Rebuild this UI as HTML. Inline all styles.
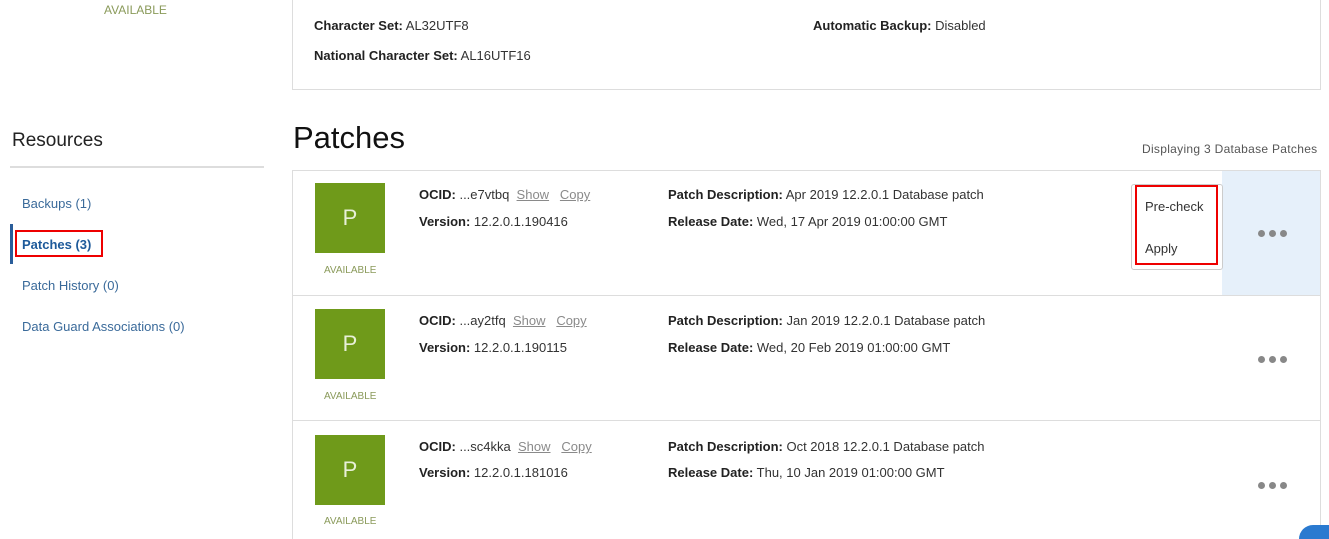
<!DOCTYPE html>
<html style="overflow:hidden;height:539px"><head><style>
body{margin:0;width:1329px;height:539px;overflow:hidden;background:#fff;font-family:"Liberation Sans",sans-serif;color:#333;position:relative}
.a{position:absolute;white-space:nowrap}
.s{font-size:13px}
b{font-weight:bold;color:#222}
.card{position:absolute;left:292px;width:1027px;border:1px solid #ddd;background:#fff}
.ic{position:absolute;left:315px;width:70px;height:70px;background:#6f9a1a;color:#e8f0d8;font-size:22px;text-align:center;line-height:70px}
.av{font-size:10px;color:#8a9a5a}
.lk{color:#8a8a8a;text-decoration:underline}
.dots{position:absolute;left:1258px;font-size:0}
.dots i{display:inline-block;width:7px;height:7px;border-radius:50%;background:#888;margin-right:4px}
</style></head><body>
<div class="a av" style="left:104px;top:3px;font-size:12px">AVAILABLE</div>
<div style="position:absolute;left:292px;top:-2px;width:1027px;height:91px;border:1px solid #ddd;border-top:none"></div>
<div class="a s" style="left:314px;top:18px"><b>Character Set:</b> AL32UTF8</div>
<div class="a s" style="left:314px;top:48px"><b>National Character Set:</b> AL16UTF16</div>
<div class="a s" style="left:813px;top:18px"><b>Automatic Backup:</b> Disabled</div>
<div class="a" style="left:12px;top:130px;font-size:19px;color:#222">Resources</div>
<div style="position:absolute;left:10px;top:166px;width:254px;height:2px;background:#ddd"></div>
<div class="a s" style="left:22px;top:196px;color:#3a6a9a">Backups (1)</div>
<div style="position:absolute;left:10px;top:224px;width:3px;height:40px;background:#2a5d9a"></div>
<div class="a s" style="left:22px;top:237px;color:#1e5a9a;font-weight:bold">Patches (3)</div>
<div style="position:absolute;left:15px;top:230px;width:88px;height:27px;border:2px solid #e00;box-sizing:border-box"></div>
<div class="a s" style="left:22px;top:278px;color:#3a6a9a">Patch History (0)</div>
<div class="a s" style="left:22px;top:319px;color:#3a6a9a">Data Guard Associations (0)</div>
<div class="a" style="left:293px;top:120px;font-size:31px;color:#111">Patches</div>
<div class="a" style="left:1142px;top:142px;font-size:12px;color:#555;letter-spacing:0.3px">Displaying 3 Database Patches</div>

<div class="card" style="top:170px;height:124px"><div style="position:absolute;right:0;top:0;width:98px;height:124px;background:#e6f0fa"></div></div>
<div class="card" style="top:295px;height:124px"></div>
<div class="card" style="top:420px;height:118px;border-bottom:none"></div>

<div class="ic" style="top:183px">P</div><div class="a av" style="left:324px;top:265px">AVAILABLE</div>
<div class="a s" style="left:419px;top:187px"><b>OCID:</b> ...e7vtbq &nbsp;<span class="lk">Show</span> &nbsp; <span class="lk">Copy</span></div>
<div class="a s" style="left:419px;top:214px"><b>Version:</b> 12.2.0.1.190416</div>
<div class="a s" style="left:668px;top:187px"><b>Patch Description:</b> Apr 2019 12.2.0.1 Database patch</div>
<div class="a s" style="left:668px;top:214px"><b>Release Date:</b> Wed, 17 Apr 2019 01:00:00 GMT</div>
<div style="position:absolute;left:1131px;top:184px;width:90px;height:84px;background:#fff;border:1px solid #ccc;border-radius:3px"></div>
<div style="position:absolute;left:1135px;top:185px;width:83px;height:80px;border:2px solid #e00;box-sizing:border-box"></div>
<div class="a s" style="left:1145px;top:199px">Pre-check</div>
<div class="a s" style="left:1145px;top:241px">Apply</div>
<div class="dots" style="top:230px"><i></i><i></i><i></i></div>

<div class="ic" style="top:309px">P</div><div class="a av" style="left:324px;top:391px">AVAILABLE</div>
<div class="a s" style="left:419px;top:313px"><b>OCID:</b> ...ay2tfq &nbsp;<span class="lk">Show</span> &nbsp; <span class="lk">Copy</span></div>
<div class="a s" style="left:419px;top:340px"><b>Version:</b> 12.2.0.1.190115</div>
<div class="a s" style="left:668px;top:313px"><b>Patch Description:</b> Jan 2019 12.2.0.1 Database patch</div>
<div class="a s" style="left:668px;top:340px"><b>Release Date:</b> Wed, 20 Feb 2019 01:00:00 GMT</div>
<div class="dots" style="top:356px"><i></i><i></i><i></i></div>

<div class="ic" style="top:435px">P</div><div class="a av" style="left:324px;top:516px">AVAILABLE</div>
<div class="a s" style="left:419px;top:439px"><b>OCID:</b> ...sc4kka &nbsp;<span class="lk">Show</span> &nbsp; <span class="lk">Copy</span></div>
<div class="a s" style="left:419px;top:465px"><b>Version:</b> 12.2.0.1.181016</div>
<div class="a s" style="left:668px;top:439px"><b>Patch Description:</b> Oct 2018 12.2.0.1 Database patch</div>
<div class="a s" style="left:668px;top:465px"><b>Release Date:</b> Thu, 10 Jan 2019 01:00:00 GMT</div>
<div class="dots" style="top:482px"><i></i><i></i><i></i></div>
<div style="position:absolute;left:1299px;top:525px;width:30px;height:14px;border-radius:16px 0 0 0;background:#2a7ad0"></div>
</body></html>
